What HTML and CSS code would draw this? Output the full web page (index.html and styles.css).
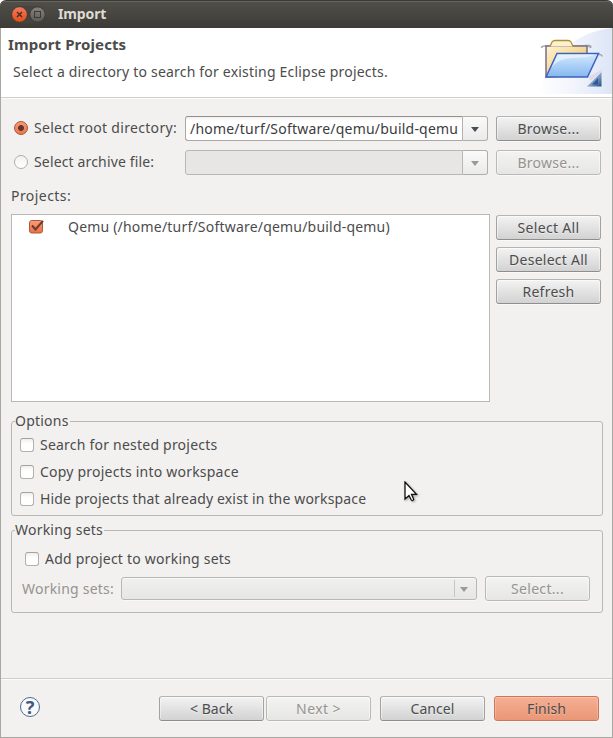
FILE: index.html
```html
<!DOCTYPE html>
<html lang="en">
<head>
<meta charset="utf-8">
<title>Import</title>
<link rel="stylesheet" href="styles.css">
</head>
<body>
<div class="window">
  <header class="titlebar">
    <svg class="controls" width="34" height="18" viewBox="0 0 34 18">
      <defs>
        <linearGradient id="close" x2="0" y2="1"><stop stop-color="#f37d5d"/><stop offset="1" stop-color="#e04c1b"/></linearGradient>
        <linearGradient id="max" x2="0" y2="1"><stop stop-color="#85837b"/><stop offset="1" stop-color="#5c5a54"/></linearGradient>
      </defs>
      <rect width="34" height="17.5" rx="8.7" fill="#45443f"/>
      <circle cx="8.5" cy="8.5" r="7.8" fill="url(#close)" stroke="#34332f" stroke-width=".7"/>
      <path d="M6 6l5 5M11 6l-5 5" stroke="#4a2a1e" stroke-width="1.4"/>
      <circle cx="26.5" cy="8.5" r="7.6" fill="url(#max)" stroke="#34332f" stroke-width=".7"/>
      <rect x="23.5" y="5.5" width="6" height="6" fill="none" stroke="#3b3a36"/>
    </svg>
    <span class="caption">Import</span>
  </header>

  <main class="dialog">
    <section class="banner">
      <div class="banner-text">
        <h1>Import Projects</h1>
        <p>Select a directory to search for existing Eclipse projects.</p>
      </div>
      <svg class="banner-art" width="75" height="66" viewBox="0 0 75 66">
        <defs>
          <linearGradient id="sky" x1="0" x2="1"><stop stop-color="#fff"/><stop offset=".5" stop-color="#f1f4fc"/><stop offset="1" stop-color="#dde5f6"/></linearGradient>
          <linearGradient id="back" x1="0" x2="1" y2="1"><stop stop-color="#fff3cf"/><stop offset=".5" stop-color="#f6d894"/><stop offset="1" stop-color="#ddb458"/></linearGradient>
          <linearGradient id="front" x2="0" y2="1"><stop stop-color="#d6e9fd"/><stop offset=".5" stop-color="#acd0f8"/><stop offset="1" stop-color="#86b7ee"/></linearGradient>
          <linearGradient id="corner" x1="0" x2="1" y2="1"><stop offset=".3" stop-color="#b9cce4"/><stop offset="1" stop-color="#214d87"/></linearGradient>
        </defs>
        <path d="M0 66C20 20 42 4 75 0V66Z" fill="url(#sky)"/>
        <path d="M51 49L68 40L54 53Z" fill="#e0dae8"/>
        <path d="M4.500 20Q4.500 18 8 18H50Q53 18 53.500 20M48 17.500H52Q54 17.500 54 19.500M15 28Q15 26 18 26M62 26.500Q65 26.500 65 28.500" fill="none" stroke="#a7a7b2" stroke-width="1.5"/>
        <path d="M9 49V18H50V47Z" fill="url(#back)" stroke="#7b6c8c" stroke-width="1.5"/>
        <path d="M13 18.500L15 14Q16 12.500 18 12.500H31Q33 12.500 34 14L36 18.500" fill="#fcf0cf" stroke="#b08e37" stroke-width="1.3"/>
        <path d="M9 49L20 25.500H61.500L50.500 49Z" fill="url(#front)" stroke="#3c62bd" stroke-width="1.5"/>
        <path d="M14.500 40Q21 30 36 30Q50 30 58 26.500H20.500Z" fill="#eff7ff" opacity=".65"/>
        <path d="M64.500 44V58.500H50Z" fill="url(#corner)"/>
        <path d="M61 50V56.500H55Z" fill="#2b5a97"/>
      </svg>
    </section>

    <div class="content">
      <div class="source-row">
        <label class="choice"><i class="radio on"></i><span class="root-label">Select root directory:</span></label>
        <div class="combo"><div class="entry"><span>/home/turf/Software/qemu/build-qemu</span></div><div class="drop"><i class="arrow"></i></div></div>
        <button class="btn browse">Browse...</button>
      </div>
      <div class="source-row">
        <label class="choice"><i class="radio"></i><span class="archive-label">Select archive file:</span></label>
        <div class="combo disabled"><div class="entry"></div><div class="drop"><i class="arrow"></i></div></div>
        <button class="btn browse" disabled>Browse...</button>
      </div>

      <div class="projects-label">Projects:</div>
      <div class="projects">
        <div class="list">
          <div class="item">
            <svg width="17" height="17" viewBox="0 0 17 17">
              <defs><linearGradient id="tick" x2="0" y2="1"><stop stop-color="#fa9c78"/><stop offset="1" stop-color="#ec6e42"/></linearGradient></defs>
              <rect x="1.500" y="2.500" width="13" height="12.500" rx="2.200" fill="url(#tick)" stroke="#a95a3d"/>
              <path d="M4 7.500L7.500 11.500L15 2.800" fill="none" stroke="#6b3a2a" stroke-width="2"/>
            </svg>
            <span>Qemu (/home/turf/Software/qemu/build-qemu)</span>
          </div>
        </div>
        <div class="actions">
          <button class="btn select-all">Select All</button>
          <button class="btn">Deselect All</button>
          <button class="btn">Refresh</button>
        </div>
      </div>

      <fieldset class="options">
        <legend>Options</legend>
        <label class="check"><i class="box"></i>Search for nested projects</label>
        <label class="check"><i class="box"></i>Copy projects into workspace</label>
        <label class="check hide"><i class="box"></i>Hide projects that already exist in the workspace</label>
      </fieldset>

      <fieldset class="sets">
        <legend>Working sets</legend>
        <label class="check"><i class="box"></i>Add project to working sets</label>
        <div class="set-row">
          <span class="set-label">Working sets:</span>
          <div class="set-combo"><i class="arrow"></i></div>
          <button class="btn select" disabled>Select...</button>
        </div>
      </fieldset>
    </div>

    <footer class="footer">
      <div class="help">?</div>
      <div class="pair">
        <button class="btn tight">&lt; Back</button>
        <button class="btn next" disabled>Next &gt;</button>
      </div>
      <button class="btn tight">Cancel</button>
      <button class="btn tight primary">Finish</button>
    </footer>
  </main>
  <svg class="cursor" width="16" height="22" viewBox="0 0 16 22">
    <path d="M1 1V18L5 14.500L7.300 19Q8 20 9 19.300Q10 18.700 9.500 17.700L7.500 13.300H12.500Z" fill="#fff" stroke="#111" stroke-width="1.3"/>
  </svg>
</div>
</body>
</html>
```
FILE: styles.css
```css
* { box-sizing: border-box; }
body {
  margin: 0;
  background: #fff;
  font: 14px/20px "Noto Sans", "Open Sans", sans-serif;
  letter-spacing: .22px;
  color: #4c4c4c;
}
.window {
  position: relative;
  width: 613px;
  height: 738px;
  display: flex;
  flex-direction: column;
  overflow: hidden;
}
.titlebar {
  height: 28px;
  flex: none;
  display: flex;
  align-items: center;
  padding-left: 11px;
  background: linear-gradient(#504f49, #3c3b37);
  border-top: 1px solid #3a3935;
  box-shadow: inset 0 1px #67655e;
  border-radius: 6px 6px 0 0;
}
.controls { margin-top: 1px; }
.caption {
  margin: 0 0 2px 13px;
  font-weight: bold;
  letter-spacing: -.12px;
  color: #dfdbd2;
}
.dialog {
  flex: 1;
  display: flex;
  flex-direction: column;
  background: #f2f1f0;
  border: 1px solid #a9a7a2;
  border-top: 0;
}
.banner {
  height: 70px;
  flex: none;
  display: flex;
  justify-content: space-between;
  background: #fff;
  border-bottom: 1px solid #d0cfcd;
}
.banner-text { padding: 6px 0 0 7px; white-space: nowrap; }
h1 { margin: 0; font-size: 15px; line-height: 20px; letter-spacing: .1px; }
.banner p { margin: 8px 0 0 5px; letter-spacing: .2px; }
.banner-art { flex: none; }
.content { padding: 18px 10px 0; flex: 1; border-top: 1px solid #fbfbfa; }
.source-row { display: flex; align-items: center; height: 25px; margin-bottom: 9px; }
.source-row:first-child { margin-top: -1px; }
.choice { width: 174px; display: flex; align-items: center; padding: 0 0 2px 3px; white-space: nowrap; }
.radio {
  width: 14px;
  height: 14px;
  margin-right: 6px;
  flex: none;
  border: 1px solid #b1ada8;
  border-radius: 50%;
  background: linear-gradient(#f1f1f1, #fff);
}
.radio.on {
  border-color: #a3563b;
  background: radial-gradient(circle, #60392c 0 2.600px, transparent 3.300px), linear-gradient(#fa9873, #ee7549);
}
.root-label { letter-spacing: .31px; }
.archive-label { letter-spacing: .15px; }
.combo { width: 303px; height: 25px; display: flex; color: #3c3c3c; }
.entry {
  width: 278px;
  padding: 2px 4px 0 4px;
  border: 1px solid #aaa7a3;
  border-top-color: #928f8b;
  border-right-color: #b4b1ad;
  border-radius: 3px 0 0 3px;
  background: linear-gradient(#f0f0f0, #fff 4px);
}
.entry span { display: block; white-space: nowrap; letter-spacing: .21px; }
.drop {
  width: 25px;
  display: grid;
  place-items: center;
  border: 1px solid #b0aeab;
  border-left: 0;
  border-radius: 0 3px 3px 0;
  background: linear-gradient(#fafafa, #eaeaea);
}
.drop .arrow { margin-top: 2px; }
.arrow { width: 8px; height: 5px; background: #4c4c4c; clip-path: polygon(0 0, 100% 0, 50% 100%); }
.disabled .entry { background: #e7e6e4; border-color: #b9b7b4; }
.disabled .arrow { background: #9c9893; }
.btn {
  width: 105px;
  height: 25px;
  padding: 1px 0 0;
  font: inherit;
  letter-spacing: .26px;
  color: #4c4c4c;
  border: 1px solid #a2a2a2;
  border-top-color: #b4b4b4;
  border-bottom-color: #8e8e8e;
  border-radius: 3px;
  background: linear-gradient(#f3f3f3, #d2d2d2);
  box-shadow: inset 0 1px #fafafa, inset 1px 0 rgba(255,255,255,.45), inset -1px 0 rgba(255,255,255,.45), 0 1px #f9f8f7;
  text-shadow: 0 1px rgba(255,255,255,.5);
}
.btn:disabled {
  color: #97938e;
  border-color: #bbb9b7;
  background: linear-gradient(#f3f3f2, #e6e6e5);
}
.browse { margin-left: 8px; }
.projects-label { margin-top: 11px; letter-spacing: .45px; }
.projects { display: flex; gap: 6px; margin-top: 8px; }
.list { width: 479px; height: 188px; border: 1px solid #bab8b5; background: #fff; }
.item { display: flex; align-items: center; height: 24px; padding-left: 16px; }
.item svg { width: 17px; margin-right: 23px; flex: none; position: relative; top: -1px; }
.item span { letter-spacing: .2px; }
.actions { display: flex; flex-direction: column; gap: 7px; padding-top: 1px; }
.select-all { letter-spacing: .33px; }
fieldset {
  width: 592px;
  margin: 0;
  padding: 0;
  border: 1px solid #b9b7b4;
  border-radius: 3px;
  min-width: 0;
}
legend { padding: 0 1px 0 0; margin-left: 3px; height: 20px; }
.options { height: 105px; margin-top: 9px; }
.sets { height: 93px; margin-top: 4px; }
.check { display: flex; align-items: center; height: 27px; padding-left: 8px; white-space: nowrap; }
.hide { letter-spacing: .16px; }
.box {
  width: 14px;
  height: 14px;
  margin-right: 6px;
  flex: none;
  border: 1px solid #b5b0aa;
  border-top-color: #a5a09a;
  border-radius: 3px;
  background: linear-gradient(#efefef, #fff 5px);
}
.sets .check { padding-left: 13px; margin-top: 5px; }
.set-row { display: flex; align-items: center; height: 25px; margin-top: 4px; padding-left: 10px; }
.set-label { width: 99px; color: #97938e; }
.set-combo {
  width: 356px;
  height: 23px;
  display: flex;
  align-items: center;
  justify-content: flex-end;
  padding-right: 8px;
  border: 1px solid #b9b7b4;
  border-radius: 3px;
  background: linear-gradient(#f0f0ef, #e6e6e4);
  box-shadow: inset 0 1px #f7f7f7, 0 1px #f9f8f7;
}
.set-combo::before { content: ""; width: 1px; height: 17px; margin-right: 5px; background: #c8c6c3; }
.set-combo .arrow { background: #9c9893; margin-top: 2px; }
.select { margin-left: 8px; letter-spacing: .32px; }
.footer {
  height: 59px;
  flex: none;
  display: flex;
  align-items: center;
  padding: 1px 13px 0 19px;
  border-top: 1px solid #cfcdca;
  box-shadow: inset 0 1px #fbfbfa;
}
.help {
  width: 20px;
  height: 20px;
  margin: 0 auto 3px 0;
  border: 1.500px solid #53678f;
  border-radius: 50%;
  text-align: center;
  font: bold 18px/18px "Noto Sans", sans-serif;
  letter-spacing: 0;
  color: #435780;
  background: #f8f9fb;
}
.pair { display: flex; gap: 2px; }
.footer > .btn { margin-left: 9px; }
.tight { letter-spacing: .06px; }
.next { letter-spacing: .4px; }
.primary {
  border-color: #ce765b;
  background: linear-gradient(#f6af94, #e99776);
  box-shadow: inset 0 1px #f9c3ae, inset 1px 0 rgba(255,255,255,.2), inset -1px 0 rgba(255,255,255,.2), 0 1px #f9f8f7;
  text-shadow: 0 1px rgba(255,255,255,.3);
}
.cursor { position: absolute; left: 404px; top: 481px; filter: drop-shadow(1px 1px 1px rgba(0,0,0,.35)); }
```
